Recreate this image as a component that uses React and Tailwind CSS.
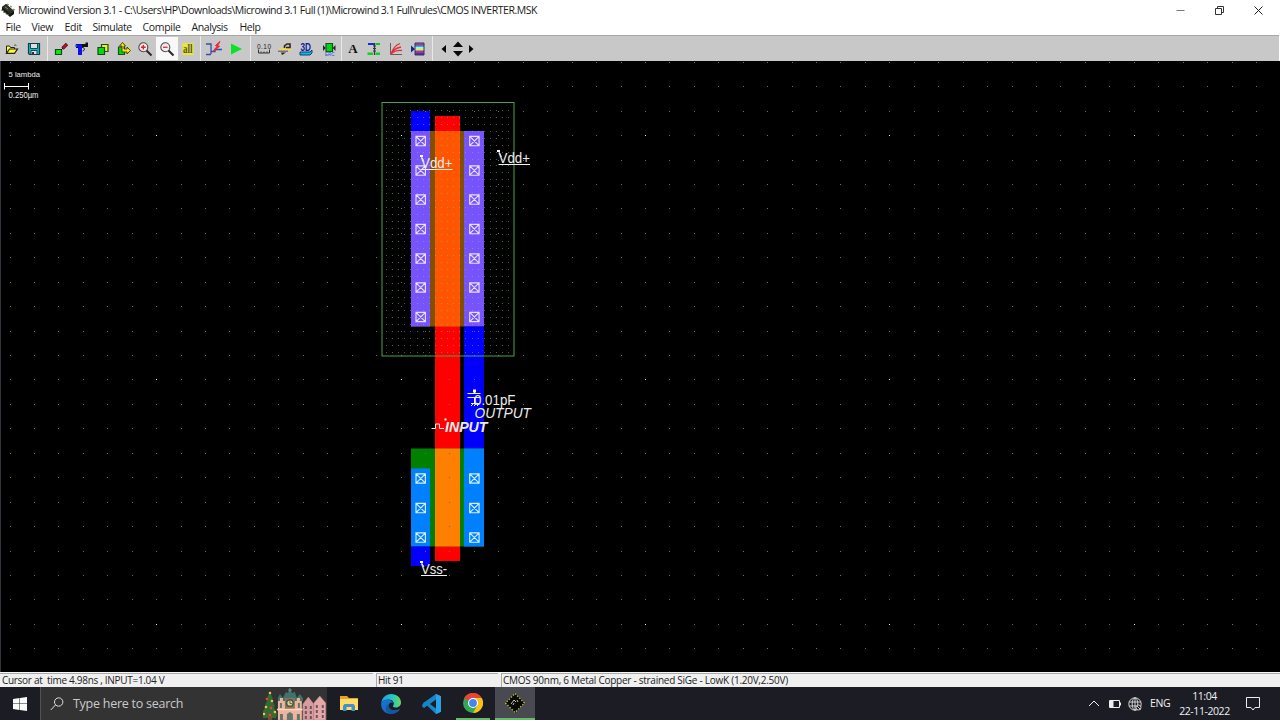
import React from "react";

const UI = "font-['Open_Sans','Noto_Sans',sans-serif]";

function Icon({ children, className = "h-[16px] w-[16px]" }) {
  return (
    <svg viewBox="0 0 16 16" className={"shrink-0 overflow-visible " + className} fill="none">
      {children}
    </svg>
  );
}

function Tool({ width, active, children }) {
  return (
    <button className={"flex h-[23px] shrink-0 items-center justify-center " + width + (active ? " bg-[#f8f8f8]" : "")}>
      {children}
    </button>
  );
}

function Sep({ width = "w-[6px]" }) {
  return (
    <div className={"flex h-[25px] shrink-0 justify-center " + width}>
      <div className="h-full w-px bg-[#e9e9e9]" />
    </div>
  );
}

function ChipIcon() {
  return (
    <svg viewBox="0 0 16 16" className="h-[16px] w-[16px]">
      <path d="M2 5 6 2 14 9 14 12 10 15 2 8Z" fill="#151713" />
      <path d="M2 5 6 2 14 9 10 12Z" fill="#2d322a" />
      <path d="M1 8l3 1M3 10l3 1M6 12l3 1M7 2l2 1M10 4l2 1M13 7l2 1" stroke="#6d7650" strokeWidth="1" />
      <path d="M5 5l3 2" stroke="#858b76" />
    </svg>
  );
}

function Toolbar() {
  return (
    <div className="mr-px flex h-[26px] items-center border-t border-[#a8a8a8] bg-[#c8c8c8] pl-px">
      <Tool width="w-[22px]">
        <Icon>
          <path d="M2.500 12V5h3l1 1.500h4V8" fill="#ff3" stroke="#222" />
          <path d="M2.500 12.300 5.500 8h8l-3 4.300Z" fill="#ffff20" stroke="#222" strokeWidth="1.200" />
          <path d="M10 4.500c1-1 2-.5 2.500.5" stroke="#333" strokeWidth=".8" />
        </Icon>
      </Tool>
      <Tool width="w-[22px]">
        <Icon>
          <path d="M2.500 2.500h11v11h-10l-1-1Z" fill="#00c4c8" stroke="#173c40" strokeWidth="1.200" />
          <path d="M5 3h6v4H5zM5 10h6v3H5z" fill="#dedede" />
          <path d="M4.500 3v4.500h7V3M5 13V9.500h6V13" stroke="#245" />
          <path d="M6 11h2v2H6z" fill="#234" />
        </Icon>
      </Tool>
      <Sep width="w-[5px]" />
      <Tool width="w-[21px]">
        <Icon>
          <path d="M2.500 8.500h6v5h-6Z" fill="#00ed18" stroke="#184818" strokeWidth="1.200" />
          <path d="m8 9 2-2" stroke="#111" />
          <path d="m9.500 7.500 4.500-4.500" stroke="#4d1118" strokeWidth="3.200" />
          <path d="m9.800 7.200 4-4" stroke="#b8142a" strokeWidth="2" />
        </Icon>
      </Tool>
      <Tool width="w-[21px]">
        <Icon>
          <path d="M2 3h9.500V1.500h2.500V6h-4l-2 1H2Z" fill="#111" />
          <path d="M1.500 3.500h6.500v2.500H1.500ZM4 6h4v8H4Z" fill="#1010ef" />
          <path d="M8.500 6.500c2.500 0 2.500 3.500 0 3.500" stroke="#111" />
          <path d="M2 4v2" stroke="#10a5ff" />
        </Icon>
      </Tool>
      <Tool width="w-[21px]">
        <Icon>
          <path d="M6.500 3.500h6.500v7h-6.500Z" fill="#e9ee20" stroke="#234d14" strokeWidth="1.200" />
          <path d="M3 6.500h6.500v7H3Z" fill="#00dc13" stroke="#184818" strokeWidth="1.200" />
        </Icon>
      </Tool>
      <Tool width="w-[21px]">
        <Icon>
          <path d="M7 2h7v11H8Z" stroke="#e6dc3c" strokeDasharray="1 1" />
          <path d="M2.500 6h6v7.500h-6Z" fill="#00d610" stroke="#234d14" strokeWidth="1.200" />
          <path d="m3.500 5 3-3.500 3 3.500H8v3h3V6l3.500 3.500L11 13v-2H6V5Z" fill="#f7e51a" stroke="#3d390c" strokeWidth=".9" />
        </Icon>
      </Tool>
      <Tool width="w-[22px]">
        <Icon>
          <circle cx="6.300" cy="6.300" r="4.500" fill="#eeeaea" stroke="#594347" strokeWidth="1.100" />
          <path d="M4 6.300h4.600M6.300 4v4.600" stroke="#e21e2c" strokeWidth="1.400" />
          <path d="m9.500 9.500 5 5" stroke="#2c2427" strokeWidth="1.900" />
        </Icon>
      </Tool>
      <Tool width="w-[22px]" active>
        <Icon>
          <circle cx="6.300" cy="6.300" r="4.500" fill="#f3eeee" stroke="#594347" strokeWidth="1.100" />
          <path d="M4 6.300h4.600" stroke="#e22e3c" strokeWidth="1.300" />
          <path d="m9.500 9.500 5 5" stroke="#2c2427" strokeWidth="1.900" />
        </Icon>
      </Tool>
      <Tool width="w-[19px]">
        <Icon>
          <path d="M2.500 2h11v12h-11Z" fill="#ebe63c" />
          <text x="3" y="12" textLength="9.500" lengthAdjust="spacingAndGlyphs" fontFamily="Liberation Serif, serif" fontSize="12" fontWeight="700" fill="#55552c">all</text>
        </Icon>
      </Tool>
      <Sep />
      <Tool width="w-[22px]">
        <Icon>
          <path d="M0 3h5v10M0 13.500h5M5 10.500h4v-2h7" stroke="#334eac" strokeWidth="1.300" />
          <path d="m14 .5-4.500 4 1.800.6L7 10.500l6.500-5.200-2-.6Z" fill="#f22231" stroke="#f22231" />
        </Icon>
      </Tool>
      <Tool width="w-[22px]">
        <Icon><path d="m3 2.500 11 5.500-11 5.500Z" fill="#0ae321" /></Icon>
      </Tool>
      <Sep />
      <Tool width="w-[21px]">
        <Icon>
          <text x="1" y="7.500" textLength="14" lengthAdjust="spacing" fontFamily="Liberation Sans, sans-serif" fontSize="6.500" fill="#222">0.10</text>
          <path d="M2.500 8.500v3.500h11V8.500M5 10.500V12M8 10.500V12M11 10.500V12" stroke="#333" />
        </Icon>
      </Tool>
      <Tool width="w-[21px]">
        <Icon>
          <path d="M2 7.500h12.500V9.500h-12.500Z" fill="#f0df37" />
          <path d="M1 9.500h10V11h-10Z" fill="#806b8e" />
          <path d="M4 11.500h5l-4 2.500Z" fill="#222" />
          <path d="M7.500 7V5l2.500-2h3v3.500H9" stroke="#332329" strokeWidth="1.600" />
        </Icon>
      </Tool>
      <Tool width="w-[22px]">
        <Icon>
          <path d="M2 11h10l2-2v3l-2 2H2Z" fill="#0bbbdc" stroke="#143f74" />
          <text x="2.500" y="10" textLength="10.500" lengthAdjust="spacingAndGlyphs" fontFamily="Liberation Sans, sans-serif" fontWeight="700" fontSize="10.500" fill="#10179c">3D</text>
        </Icon>
      </Tool>
      <Tool width="w-[23px]">
        <Icon>
          <path d="M5 2.500h6.500v8H5Z" fill="#05d314" stroke="#185018" strokeWidth="1.200" />
          <path d="M2 4v6l2.700-3ZM14.500 4v6l-2.700-3Z" fill="#222" />
          <text x="4" y="14.500" textLength="9.500" lengthAdjust="spacingAndGlyphs" fontFamily="Liberation Sans, sans-serif" fontSize="5.500" fill="#1751ed">ERC</text>
        </Icon>
      </Tool>
      <Sep width="w-[3px]" />
      <Tool width="w-[20px]">
        <span className="font-['Liberation_Serif',serif] text-[13px] leading-none font-bold text-[#111]">A</span>
      </Tool>
      <Tool width="w-[22px]">
        <Icon>
          <path d="M2 2h6v2H2Z" fill="#1728ee" />
          <path d="M1.500 11.500h5.500V14H1.500ZM9.500 11.500H14V14H9.500Z" fill="#10d321" />
          <path d="M8.500 2v12M7 5h3M7 7.500h3M7 10h3" stroke="#36343d" strokeWidth="1.200" />
          <path d="M9.500 3H14" stroke="#0fc326" strokeWidth="2" />
        </Icon>
      </Tool>
      <Tool width="w-[22px]">
        <Icon>
          <path d="M2.500 2v11.500H14" stroke="#6b5b60" />
          <path d="M3 13c2-6 5-9 9-10.500M3 13c2-4 5-6 10-7M3 13c3-3 6-4 11-3.500" stroke="#df303b" strokeWidth="1.300" />
        </Icon>
      </Tool>
      <Tool width="w-[22px]">
        <Icon>
          <path d="M5 2h9v2H5Z" fill="#f239a2" />
          <path d="M5 4h9v2H5Z" fill="#24b9ed" />
          <path d="M5 6h9v2H5Z" fill="#aceee4" />
          <path d="M5 8h9v2H5Z" fill="#f7ea20" />
          <path d="M5 10h9v2H5Z" fill="#d73add" />
          <path d="M5 12h9v2H5Z" fill="#5931ac" />
          <path d="M5 2v12h9V2Z" stroke="#3d2d6b" />
          <path d="M5 4h9M5 10h9M5 12h9" stroke="#3d2d6b" strokeWidth=".7" />
          <path d="m1 4.500 4 3.500-4 3.500Z" fill="#132890" />
        </Icon>
      </Tool>
      <Sep />
      <Tool width="w-[18px]"><Icon><path d="M10 4v8L5.500 8Z" fill="#080808" /></Icon></Tool>
      <Tool width="w-[10px]"><Icon><path d="M8 .5 13 6H3ZM3 10h10l-5 5.500Z" fill="#080808" /></Icon></Tool>
      <Tool width="w-[16px]"><Icon><path d="M6 4v8l4.500-4Z" fill="#080808" /></Icon></Tool>
    </div>
  );
}

function Contact({ x, y, color }) {
  return <path d={`M${x - 4.7} ${y - 4.7}h9.400v9.400h-9.400ZM${x - 4.7} ${y - 4.7}l9.400 9.400M${x + 4.7} ${y - 4.7}l-9.400 9.400`} stroke={color} fill="none" strokeWidth="1.150" />;
}

function Label({ x, y, width, size = 14, style, weight, children }) {
  return (
    <text x={x} y={y} textLength={width} lengthAdjust="spacingAndGlyphs" fontSize={size} fontStyle={style} fontWeight={weight} fill="#ececec">
      {children}
    </text>
  );
}

function Layout() {
  const grid = [];
  for (let r = 0; r < 25; r++) {
    for (let c = 0; c < 52; c++) {
      const major = c % 10 === 6 && r % 10 === 3;
      grid.push(<rect key={r + "-" + c} x={Math.floor(10 + c * 24.44)} y={Math.floor(62.4 + r * 24.43)} width="1" height="1" fill={major ? "#f0f0e0" : "#70705c"} />);
    }
  }
  const well = [];
  for (let x = 386; x < 513; x += 6.11) {
    for (let y = 110.2; y < 355; y += 6.9) {
      well.push(<rect key={x + "-" + y} x={Math.round(x)} y={Math.round(y)} width="1" height="1" fill="#8fbf86" fillOpacity=".5" />);
    }
  }
  return (
    <svg viewBox="0 61 1280 611" className="block h-[611px] w-[1280px] bg-black font-['Liberation_Sans',sans-serif]">
      <rect x="411" y="111" width="19" height="20" fill="#0000fb" />
      <rect x="435" y="116" width="25" height="445" fill="#fe0000" />
      <rect x="411" y="131" width="73" height="195.500" fill="#805000" />
      <rect x="411" y="131" width="19" height="195.500" fill="#7653fc" />
      <rect x="464" y="131" width="20" height="195.500" fill="#7653fc" />
      <rect x="435" y="131" width="25" height="195.500" fill="#ff5400" />
      <rect x="464" y="326.500" width="20" height="122" fill="#0000fb" />
      <rect x="411" y="448.500" width="73" height="98" fill="#008000" />
      <rect x="411" y="468.500" width="19" height="78" fill="#0080ff" />
      <rect x="464" y="448.500" width="20" height="98" fill="#0080ff" />
      <rect x="435" y="448.500" width="25" height="98" fill="#ff8000" />
      <rect x="411" y="546.500" width="19" height="19.500" fill="#0000fb" />
      {grid}
      {well}
      <rect x="382" y="102.500" width="132" height="253.500" stroke="#46a34b" fill="none" />
      {[141, 170.5, 199.5, 229, 258.5, 287.5, 317].map((y) => (
        <g key={y}>
          <Contact x={420.7} y={y} color="#e7e0ff" />
          <Contact x={474.4} y={y} color="#e7e0ff" />
        </g>
      ))}
      {[478.5, 508, 537.5].map((y) => (
        <g key={y}>
          <Contact x={420.7} y={y} color="#d5efff" />
          <Contact x={474.4} y={y} color="#d5efff" />
        </g>
      ))}
      <Label x={8.5} y={77} width={31.5} size={8}>5 lambda</Label>
      <path d="M4.500 86.500h24M4.500 83v6.500M28.500 83v6.500" stroke="#fff" fill="none" />
      <Label x={8.5} y={98} width={30} size={8.5}>0.250µm</Label>
      <g stroke="#f2f2f2" fill="none">
        <path d="M421 169.500h31.500M498.500 164.500h31.500M421 575.500h26" />
        <path d="m421 156 3 6M498.500 151l3 6M421 562l3 5" />
        <path d="M474.500 391v3M467.500 393.500h13M467.500 397.500h13M474.500 398v5M471 403.500h9M471 406l2-2M474 406l2-2M477 406l2-2" />
        <path d="M431.500 428.500h4v-4.500h4v4.500h4.500" />
      </g>
      <g fill="#fff">
        <rect x="420" y="155" width="3" height="2" />
        <rect x="497" y="150" width="3" height="2" />
        <rect x="420" y="561" width="3" height="2" />
        <rect x="473" y="389.500" width="3" height="3" />
        <rect x="444.500" y="418.500" width="2" height="2" />
      </g>
      <Label x={421} y={168} width={31.5}>Vdd+</Label>
      <Label x={498.5} y={163} width={31.5}>Vdd+</Label>
      <Label x={474} y={405} width={41.5}>0.01pF</Label>
      <Label x={474.5} y={417.5} width={56.5} size={14} style="italic">OUTPUT</Label>
      <Label x={445} y={431.5} width={42.5} size={14} style="italic" weight="700">INPUT</Label>
      <Label x={421} y={573.5} width={26}>Vss-</Label>
      <rect x="0" y="61" width="1" height="611" fill="#34343c" />
    </svg>
  );
}

function House({ x, w, top, color }) {
  return (
    <g>
      <path d={`M${x} ${top + 7}l${w / 2} -7 ${w / 2} 7V33H${x}Z`} fill={color} stroke="#b98284" strokeWidth=".5" />
      {[0, 1, 2].map((r) => (
        <path key={r} d={`M${x + 2} ${top + 9 + r * 5}h2v3h-2ZM${x + w - 4} ${top + 9 + r * 5}h2v3h-2Z`} fill="#705363" />
      ))}
    </g>
  );
}

function Village() {
  return (
    <svg viewBox="0 0 64 33" className="h-[33px] w-[64px]">
      <path d="m7 5 3 7-1 1 3 6-1 1 3 7-1 4H0l-1-5 4-7-1-1 3-6-1-1Z" fill="#356b32" />
      <path d="M5 28h4v5H5Z" fill="#775038" />
      {[[7, 6], [4, 12], [9, 14], [3, 20], [8, 21], [12, 25], [1, 27], [7, 28]].map(([x, y], i) => (
        <circle key={i} cx={x} cy={y} r="1.300" fill={i % 3 === 1 ? "#ee442f" : "#e9ca47"} />
      ))}
      <path d="M15 14h24v19H15Z" fill="#ecb5a0" />
      <path d="M15 14v-3l2-4 3 4 3-6 2 1 2-4 2 4 3-1 2 6 3-4 3 4v3Z" fill="#41736d" />
      <path d="M17 14v-3h3v3M34 14v-3h3v3" fill="#e7ba9b" />
      <path d="M22 11h10v11H22Z" fill="#996f56" />
      <path d="M14 22.500h26" stroke="#f6dac6" strokeWidth="1.500" />
      <circle cx="27" cy="16" r="3.300" fill="#e6cd89" stroke="#355f4f" strokeWidth="1.500" />
      <path d="M27 13.500v3h2" stroke="#43352b" strokeWidth=".7" fill="none" />
      <path d="M17 16h2v5h-2ZM35 16h2v5h-2ZM17 27h3v6h-3ZM24 33v-6l3-2 3 2v6ZM34 27h3v6h-3Z" fill="#64756b" />
      <path d="M25 3h4M27 1v4" stroke="#5e9a91" />
      <House x={40} w={11} top={10} color="#d79c9d" />
      <House x={51} w={12} top={9} color="#e3a9a8" />
    </svg>
  );
}

function Taskbar() {
  return (
    <div className={"flex h-[33px] items-stretch bg-[#1c1c24] text-[#f1f1f1] " + UI}>
      <div className="flex w-10 items-center justify-center">
        <svg viewBox="0 0 14 14" className="h-[14px] w-[14px]" fill="#fafafa">
          <path d="M0 2 6.500 1v5.500H0ZM7 1l7-1v6.500H7ZM0 7h6.500v6L0 12ZM7 7h7v7l-7-1Z" />
        </svg>
      </div>
      <div className="flex w-[287px] items-center border-l border-[#515157] bg-[#333334]">
        <svg viewBox="0 0 14 14" className="ml-[9px] h-[14px] w-[14px]" fill="none" stroke="#dedede">
          <circle cx="8.700" cy="5" r="4.200" />
          <path d="m5.500 8-4.700 5" />
        </svg>
        <span className="ml-[9px] w-[191px] pt-px text-[12.5px] leading-none tracking-[-0.02em] text-[#cacaca]">Type here to search</span>
        <Village />
      </div>
      <div className="flex w-11 items-center justify-center">
        <svg viewBox="0 0 20 18" className="h-[18px] w-[20px]">
          <path d="M1 1h7l2 2h9v12H1Z" fill="#e6a52a" />
          <path d="M1 4h18v11H1Z" fill="#ffdb69" />
          <path d="M4 16v-5l1.500-2h9l1.500 2v5h-3.500v-4h-5v4Z" fill="#3e91cd" />
        </svg>
      </div>
      <div className="flex w-[39px] items-center justify-center">
        <svg viewBox="0 0 20 20" className="h-[20px] w-[20px]">
          <defs>
            <linearGradient id="edge-green" x2="1"><stop stopColor="#1c9de4" /><stop offset=".6" stopColor="#28c8c4" /><stop offset="1" stopColor="#72d74b" /></linearGradient>
            <linearGradient id="edge-blue" y2="1"><stop stopColor="#1a76cc" /><stop offset="1" stopColor="#1761bd" /></linearGradient>
          </defs>
          <path d="M.2 9C1 3.500 5 0 10 0c6 0 10 4 10 8.500 0 3.500-2.500 5-5.500 5-2 0-3-1-2.300-2 2-3-1-6-4.500-6C4 5.500 1 7 .2 9Z" fill="url(#edge-green)" />
          <path d="M.2 9C1 7 3.500 5.500 7 5.700c2.500.1 4.700 1.500 5.200 3.500-1-1-3-.8-4 .6-2 3 1 7 6 6.500 2 0 4-1 5-1.500C17.500 18 14 20 10 20 4 20-.5 15.500.2 9Z" fill="url(#edge-blue)" />
          <path d="M7.500 10.500c-1 4 3 7.500 10 5.500-2 3-6 4.500-9 3.500-5-2-5-7-1-9Z" fill="#1455a4" />
        </svg>
      </div>
      <div className="flex w-[43px] items-center justify-center">
        <svg viewBox="0 0 20 20" className="h-[20px] w-[20px]">
          <path d="m14 0 5 2.300v15.400L14 20 4 10.500 2 12 0 11l2-2.500Z" fill="#1687cb" />
          <path d="m2 8 2 1.500L14 0v5L2 14l-2-1.500Z" fill="#1684c7" />
          <path d="m14 5.500-6 4.500 6 4.500Z" fill="#1c1c24" />
          <path d="m14 0 5 2.300v15.400L14 20Z" fill="#2ba1e8" />
        </svg>
      </div>
      <div className="flex w-[40px] flex-col items-center justify-between pt-[6px]">
        <svg viewBox="0 0 20 20" className="h-[20px] w-[20px]">
          <circle cx="10" cy="10" r="10" fill="#34a853" />
          <path d="M10 10 1.300 5A10 10 0 0 1 18.700 5H10Z" fill="#e94335" />
          <path d="M10 10V5h8.700A10 10 0 0 1 10 20l4.300-7.500Z" fill="#fbc116" />
          <path d="m1.300 5 4.400 7.500L10 10V5Z" fill="#34a853" />
          <path d="M1.300 5 5.500 8 10 5V2H4Z" fill="#e94335" />
          <circle cx="10" cy="10" r="5" fill="#fff" />
          <circle cx="10" cy="10" r="3.900" fill="#4285f4" />
        </svg>
        <div className="h-[2px] w-[34px] bg-[#69b96b]" />
      </div>
      <div className="ml-[2px] flex w-10 flex-col items-center justify-between bg-[#494952] pt-[6px]">
        <svg viewBox="0 0 20 20" className="h-[20px] w-[20px]">
          <path d="M10 1 19 10 10 19 1 10Z" fill="#090a07" stroke="#090a07" strokeWidth="1.500" />
          <path d="M10 .5 19.500 10 10 19.500 .5 10Z" fill="none" stroke="#bdc039" strokeWidth="1.300" strokeDasharray="1.500 1.500" />
          <path d="m6 11 3-4 2 2M8 12l1-2M12 7l1 2" stroke="#d5d7bf" fill="none" strokeWidth=".9" />
        </svg>
        <div className="h-[2px] w-full bg-[#69b96b]" />
      </div>
      <div className="ml-auto flex items-center">
        <svg viewBox="0 0 12 7" className="h-[7px] w-[12px]" fill="none" stroke="#ededed"><path d="m1 6 5-5 5 5" /></svg>
        <svg viewBox="0 0 13 8" className="ml-[8px] h-[8px] w-[13px]" fill="none" stroke="#ededed"><path d="M1.500.5h10v7h-10ZM12.500 2.500v3" /><path d="M2 1h3v6H2Z" fill="#ededed" /></svg>
        <svg viewBox="0 0 14 14" className="ml-[7px] h-[14px] w-[14px]" fill="none" stroke="#e3e3e3" strokeWidth=".9">
          <circle cx="7" cy="7" r="6.200" /><ellipse cx="7" cy="7" rx="2.800" ry="6.200" /><path d="M1 5h12M1 9h7M7 1v12" />
          <circle cx="10.500" cy="10.500" r="2.500" fill="#1c1c24" /><path d="m8.800 8.800 3.500 3.500" />
        </svg>
        <span className="ml-[8px] w-[20px] text-[10.5px] leading-none tracking-[-0.04em]">ENG</span>
        <div className="ml-[8px] flex w-[53px] flex-col items-center text-[10.5px] leading-[15px] tracking-[-0.04em] whitespace-nowrap">
          <span>11:04</span><span>22-11-2022</span>
        </div>
        <svg viewBox="0 0 14 14" className="ml-[15px] mr-[20px] h-[14px] w-[14px]" fill="none" stroke="#ededed"><path d="M.5.5h13v10H9L7 13l-2-2.500H.5Z" /></svg>
      </div>
    </div>
  );
}

export default function App() {
  return (
    <div className="flex h-[720px] w-[1280px] flex-col overflow-hidden bg-white">
      <header className={"flex h-[20px] items-center " + UI}>
        <div className="w-[18px]"><ChipIcon /></div>
        <h1 className="text-[10.5px] leading-none font-normal tracking-[-0.475px] whitespace-nowrap text-[#191919]">
          Microwind Version 3.1 - C:\Users\HP\Downloads\Microwind 3.1 Full (1)\Microwind 3.1 Full\rules\CMOS INVERTER.MSK
        </h1>
        <div className="ml-auto mr-[17px] flex items-center gap-[30px]">
          <svg viewBox="0 0 9 9" className="h-[9px] w-[9px]" stroke="#777"><path d="M.5 4.500h8" /></svg>
          <svg viewBox="0 0 9 9" className="h-[9px] w-[9px]" fill="none" stroke="#333"><path d="M.5 2.500h6v6h-6ZM2.500 2V.5h6v6H7" /></svg>
          <svg viewBox="0 0 9 9" className="h-[9px] w-[9px]" stroke="#222"><path d="m.5.5 8 8M8.500.5l-8 8" /></svg>
        </div>
      </header>
      <nav className={"flex h-[15px] items-center pl-[5.5px] text-[10.5px] leading-none text-[#1c1c1c] " + UI}>
        <span className="w-[26px] tracking-[-0.03em]">File</span>
        <span className="w-[33px] tracking-[-0.03em]">View</span>
        <span className="w-[28px] tracking-[-0.03em]">Edit</span>
        <span className="w-[50px] tracking-[-0.04em]">Simulate</span>
        <span className="w-[49px] tracking-[-0.03em]">Compile</span>
        <span className="w-[48px] tracking-[-0.04em]">Analysis</span>
        <span className="tracking-[-0.04em]">Help</span>
      </nav>
      <Toolbar />
      <Layout />
      <footer className={"flex h-[15px] gap-[3px] border-t border-[#f5f5f5] bg-[#f0f0f0] text-[10px] leading-[13px] tracking-[-0.03em] whitespace-pre text-[#222] " + UI}>
        <span className="w-[373px] border-t border-[#aaa] pl-[2px]">Cursor at  time 4.98ns , INPUT=1.04 V</span>
        <span className="w-[122px] border-t border-l border-[#aaa] pl-px">Hit 91</span>
        <span className="flex-1 border-t border-l border-[#aaa] pl-px tracking-[-0.26px]">CMOS 90nm, 6 Metal Copper - strained SiGe - LowK (1.20V,2.50V)</span>
      </footer>
      <Taskbar />
    </div>
  );
}
